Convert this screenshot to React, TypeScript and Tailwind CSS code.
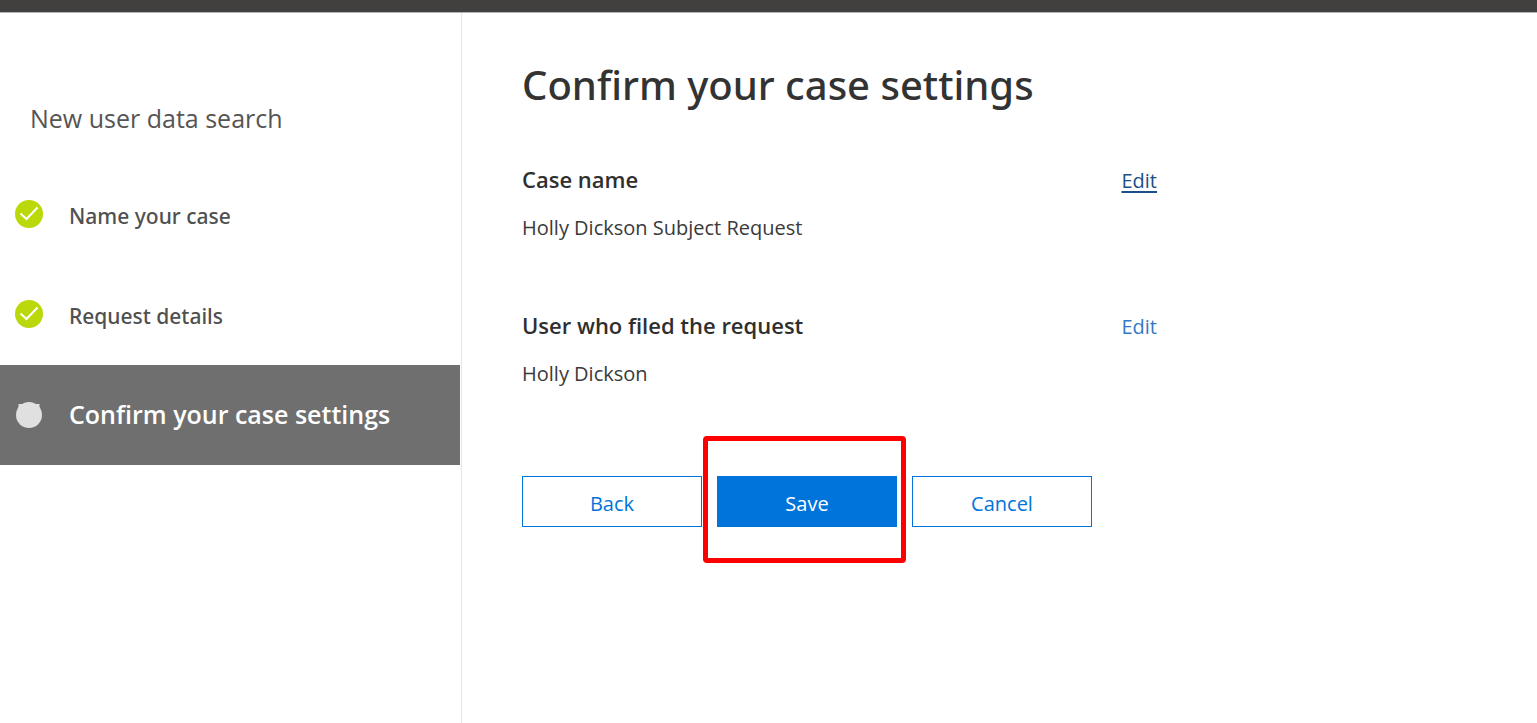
import type { ReactNode } from "react";

type Step = { label: string; state: "done" | "current" };

const steps: Step[] = [
  { label: "Name your case", state: "done" },
  { label: "Request details", state: "done" },
  { label: "Confirm your case settings", state: "current" },
];

function DoneIcon() {
  return (
    <svg viewBox="0 0 28 28" className="mb-0.5 size-7 shrink-0" aria-hidden="true">
      <circle cx="14" cy="14" r="14" fill="#bad80a" />
      <path d="M5.5 13.5 11.5 19 22.5 7.5" fill="none" stroke="#fff" strokeWidth="2" />
    </svg>
  );
}

function CurrentIcon() {
  return (
    <svg viewBox="0 0 28 28" className="size-7 shrink-0" aria-hidden="true">
      <circle cx="14" cy="14" r="13" fill="#e0e0e0" />
      <path d="M3.500 3H24.500V7H3.500z" fill="#e0e0e0" />
    </svg>
  );
}

function Setting({ title, value, linkClass }: { title: string; value: string; linkClass: string }) {
  return (
    <section className="flex justify-between">
      <div>
        <h2 className="text-[22px] leading-8 font-semibold text-[#2f2f2f]">{title}</h2>
        <p className="mt-[17px] text-xl leading-8 text-[#3a3a3a]">{value}</p>
      </div>
      <a href="#edit" aria-label={"Edit " + title} className={linkClass}>
        Edit
      </a>
    </section>
  );
}

function ActionButton({ children, primary = false }: { children: ReactNode; primary?: boolean }) {
  return (
    <button
      type="button"
      className={
        primary
          ? "h-[51px] w-[180px] border border-[#0074da] bg-[#0074da] pt-1 text-xl text-white"
          : "h-[51px] w-[180px] border border-[#0074da] bg-white pt-1 text-xl text-[#0074da]"
      }
    >
      {children}
    </button>
  );
}

export default function App() {
  return (
    <div className="flex min-h-screen flex-col bg-white font-['Open_Sans','Noto_Sans',sans-serif]">
      <header className="h-[13px] border-b border-[#b3b3b3] bg-[#41403e]" />
      <div className="flex grow">
        <aside className="w-[462px] shrink-0 border-r border-[#e5e5e5] pt-[87px]">
          <p className="px-[30px] text-[25px] leading-9 text-[#555]">New user data search</p>
          <ol className="mt-[29px]">
            {steps.map((step) =>
              step.state === "done" ? (
                <li key={step.label} className="flex h-[100px] items-center gap-[26px] pl-[15px]">
                  <DoneIcon />
                  <span className="pt-1 font-['Noto_Sans',sans-serif] text-[21px] font-medium text-[#505050]">{step.label}</span>
                </li>
              ) : (
                <li
                  key={step.label}
                  aria-current="step"
                  className="mr-px flex h-[100px] items-center gap-[26px] bg-[#6f6f6f] pl-[15px]"
                >
                  <CurrentIcon />
                  <span className="text-[25px] font-semibold text-white">{step.label}</span>
                </li>
              ),
            )}
          </ol>
        </aside>
        <main className="grow pt-[42px] pl-[60px]">
          <h1 className="font-['Noto_Sans',sans-serif] text-[40px] leading-[60px] font-medium text-[#333]">
            Confirm your case settings
          </h1>
          <div className="mt-12 flex w-[635px] flex-col gap-[65px]">
            <Setting
              title="Case name"
              value="Holly Dickson Subject Request"
              linkClass="mt-0.5 h-8 text-xl leading-8 text-[#1c4f87] underline decoration-2 underline-offset-3"
            />
            <Setting
              title="User who filed the request"
              value="Holly Dickson"
              linkClass="mt-0.5 h-8 text-xl leading-8 text-[#337ac4]"
            />
          </div>
          <div className="mt-[86px] flex gap-[15px]">
            <ActionButton>Back</ActionButton>
            <div className="relative">
              <ActionButton primary>Save</ActionButton>
              <div className="pointer-events-none absolute -top-10 -right-[9px] -bottom-9 -left-[14px] rounded-sm border-5 border-[#ff0000]" />
            </div>
            <ActionButton>Cancel</ActionButton>
          </div>
        </main>
      </div>
    </div>
  );
}
